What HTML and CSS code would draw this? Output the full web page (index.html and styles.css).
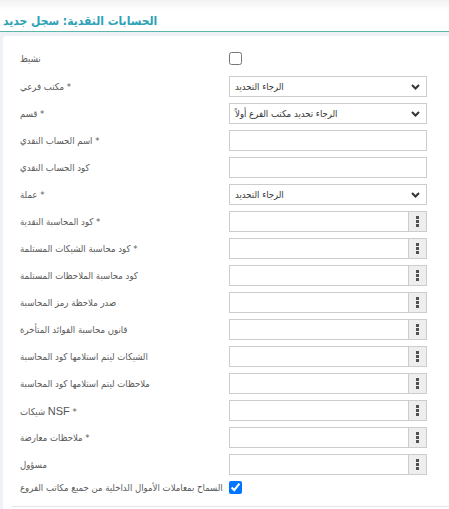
FILE: index.html
```html
<!DOCTYPE html>
<html lang="ar">
<head>
<meta charset="utf-8">
<link rel="stylesheet" href="styles.css">
</head>
<body>
<div class="topbar"></div>
<div class="header"><h1 class="title">الحسابات النقدية: سجل جديد</h1></div>
<div class="content">
  <div class="card">
    <div class="form">
      <div class="row row-check first">
        <label class="label">نشيط</label>
        <div class="field"><input type="checkbox" class="check"></div>
      </div>
      <div class="row">
        <label class="label">مكتب فرعي *</label>
        <div class="field select"><span class="select-text">الرجاء التحديد</span><svg class="chev" width="9" height="6" viewBox="0 0 9 6"><path d="M1 1 L4.5 4.5 L8 1" fill="none" stroke="#333" stroke-width="2"/></svg></div>
      </div>
      <div class="row">
        <label class="label">قسم *</label>
        <div class="field select"><span class="select-text">الرجاء تحديد مكتب الفرع أولاً</span><svg class="chev" width="9" height="6" viewBox="0 0 9 6"><path d="M1 1 L4.5 4.5 L8 1" fill="none" stroke="#333" stroke-width="2"/></svg></div>
      </div>
      <div class="row">
        <label class="label">اسم الحساب النقدي *</label>
        <div class="field"><input type="text" class="input"></div>
      </div>
      <div class="row">
        <label class="label">كود الحساب النقدي</label>
        <div class="field"><input type="text" class="input"></div>
      </div>
      <div class="row">
        <label class="label">عملة *</label>
        <div class="field select"><span class="select-text">الرجاء التحديد</span><svg class="chev" width="9" height="6" viewBox="0 0 9 6"><path d="M1 1 L4.5 4.5 L8 1" fill="none" stroke="#333" stroke-width="2"/></svg></div>
      </div>
      <div class="row">
        <label class="label">كود المحاسبة النقدية *</label>
        <div class="field group"><input type="text" class="input"><span class="btn"><svg width="3" height="11" viewBox="0 0 3 11"><rect y="0" width="3" height="3" fill="#505050"/><rect y="4" width="3" height="3" fill="#505050"/><rect y="8" width="3" height="3" fill="#505050"/></svg></span></div>
      </div>
      <div class="row">
        <label class="label">كود محاسبة الشيكات المستلمة *</label>
        <div class="field group"><input type="text" class="input"><span class="btn"><svg width="3" height="11" viewBox="0 0 3 11"><rect y="0" width="3" height="3" fill="#505050"/><rect y="4" width="3" height="3" fill="#505050"/><rect y="8" width="3" height="3" fill="#505050"/></svg></span></div>
      </div>
      <div class="row">
        <label class="label">كود محاسبة الملاحظات المستلمة</label>
        <div class="field group"><input type="text" class="input"><span class="btn"><svg width="3" height="11" viewBox="0 0 3 11"><rect y="0" width="3" height="3" fill="#505050"/><rect y="4" width="3" height="3" fill="#505050"/><rect y="8" width="3" height="3" fill="#505050"/></svg></span></div>
      </div>
      <div class="row">
        <label class="label">صدر ملاحظة رمز المحاسبة</label>
        <div class="field group"><input type="text" class="input"><span class="btn"><svg width="3" height="11" viewBox="0 0 3 11"><rect y="0" width="3" height="3" fill="#505050"/><rect y="4" width="3" height="3" fill="#505050"/><rect y="8" width="3" height="3" fill="#505050"/></svg></span></div>
      </div>
      <div class="row">
        <label class="label">قانون محاسبة الفوائد المتأخرة</label>
        <div class="field group"><input type="text" class="input"><span class="btn"><svg width="3" height="11" viewBox="0 0 3 11"><rect y="0" width="3" height="3" fill="#505050"/><rect y="4" width="3" height="3" fill="#505050"/><rect y="8" width="3" height="3" fill="#505050"/></svg></span></div>
      </div>
      <div class="row">
        <label class="label">الشيكات ليتم استلامها كود المحاسبة</label>
        <div class="field group"><input type="text" class="input"><span class="btn"><svg width="3" height="11" viewBox="0 0 3 11"><rect y="0" width="3" height="3" fill="#505050"/><rect y="4" width="3" height="3" fill="#505050"/><rect y="8" width="3" height="3" fill="#505050"/></svg></span></div>
      </div>
      <div class="row">
        <label class="label">ملاحظات ليتم استلامها كود المحاسبة</label>
        <div class="field group"><input type="text" class="input"><span class="btn"><svg width="3" height="11" viewBox="0 0 3 11"><rect y="0" width="3" height="3" fill="#505050"/><rect y="4" width="3" height="3" fill="#505050"/><rect y="8" width="3" height="3" fill="#505050"/></svg></span></div>
      </div>
      <div class="row">
        <label class="label">شيكات <span class="latin">NSF</span> *</label>
        <div class="field group"><input type="text" class="input"><span class="btn"><svg width="3" height="11" viewBox="0 0 3 11"><rect y="0" width="3" height="3" fill="#505050"/><rect y="4" width="3" height="3" fill="#505050"/><rect y="8" width="3" height="3" fill="#505050"/></svg></span></div>
      </div>
      <div class="row">
        <label class="label">ملاحظات معارضة *</label>
        <div class="field group"><input type="text" class="input"><span class="btn"><svg width="3" height="11" viewBox="0 0 3 11"><rect y="0" width="3" height="3" fill="#505050"/><rect y="4" width="3" height="3" fill="#505050"/><rect y="8" width="3" height="3" fill="#505050"/></svg></span></div>
      </div>
      <div class="row">
        <label class="label">مسؤول</label>
        <div class="field group"><input type="text" class="input"><span class="btn"><svg width="3" height="11" viewBox="0 0 3 11"><rect y="0" width="3" height="3" fill="#505050"/><rect y="4" width="3" height="3" fill="#505050"/><rect y="8" width="3" height="3" fill="#505050"/></svg></span></div>
      </div>
      <div class="row row-check">
        <label class="label">السماح بمعاملات الأموال الداخلية من جميع مكاتب الفروع</label>
        <div class="field"><input type="checkbox" class="check" checked></div>
      </div>
    </div>
    <div class="divider"></div>
  </div>
</div>
</body>
</html>
```

FILE: styles.css
```css
* { box-sizing: border-box; }
html, body { margin: 0; padding: 0; }
body {
  background: #eef1f6;
  font-family: "DejaVu Sans Condensed", "DejaVu Sans", sans-serif;
  height: 509px;
  overflow: hidden;
}
.topbar {
  height: 10px;
  background: linear-gradient(#f2f2f2, #ffffff);
}
.header {
  background: #ffffff;
  height: 22px;
  padding-left: 3px;
  border-bottom: 1px solid #5cb6a8;
  display: flex;
  align-items: center;
}
.title {
  margin: 0;
  font-size: 12px;
  font-weight: bold;
  color: #2ea2b6;
  line-height: 22px;
}
.content {
  padding: 4px 0 0 3px;
}
.card {
  background: #ffffff;
  border-radius: 3px 0 0 0;
  padding: 16px 0 0 0;
  height: 480px;
}
.form {
  display: flex;
  flex-direction: column;
  gap: 6px;
  padding-left: 17px;
}
.row {
  display: flex;
  align-items: center;
  height: 21px;
}
.row-check { height: 13px; }
.row-check.first { margin-bottom: 5px; }
.label {
  width: 209px;
  font-size: 9.5px;
  color: #5a5a5a;
  white-space: nowrap;
}
.latin {
  font-family: "Liberation Sans", Arial, sans-serif;
  font-size: 11px;
  color: #555;
}
.field {
  width: 198px;
  height: 21px;
  display: flex;
  align-items: center;
}
.row-check .field { height: 13px; }
.check {
  margin: 0;
  width: 13px;
  height: 13px;
}
.input {
  width: 100%;
  height: 21px;
  border: 1px solid #cccccc;
  margin: 0;
  padding: 0 4px;
  font-size: 10px;
  background: #fff;
}
.select {
  justify-content: space-between;
  border: 1px solid #cccccc;
  padding: 0 6px 0 5px;
  background: #fff;
}
.select-text {
  font-size: 9.5px;
  color: #333333;
  white-space: nowrap;
}
.chev { flex: none; }
.group .input { flex: 1; border-right: none; }
.btn {
  width: 19px;
  height: 21px;
  flex: none;
  background: #eeeeee;
  border: 1px solid #cccccc;
  display: flex;
  align-items: center;
  justify-content: center;
}
.divider {
  margin: 12px 0 0 9px;
  border-top: 1px solid #e6e6e6;
}
```
